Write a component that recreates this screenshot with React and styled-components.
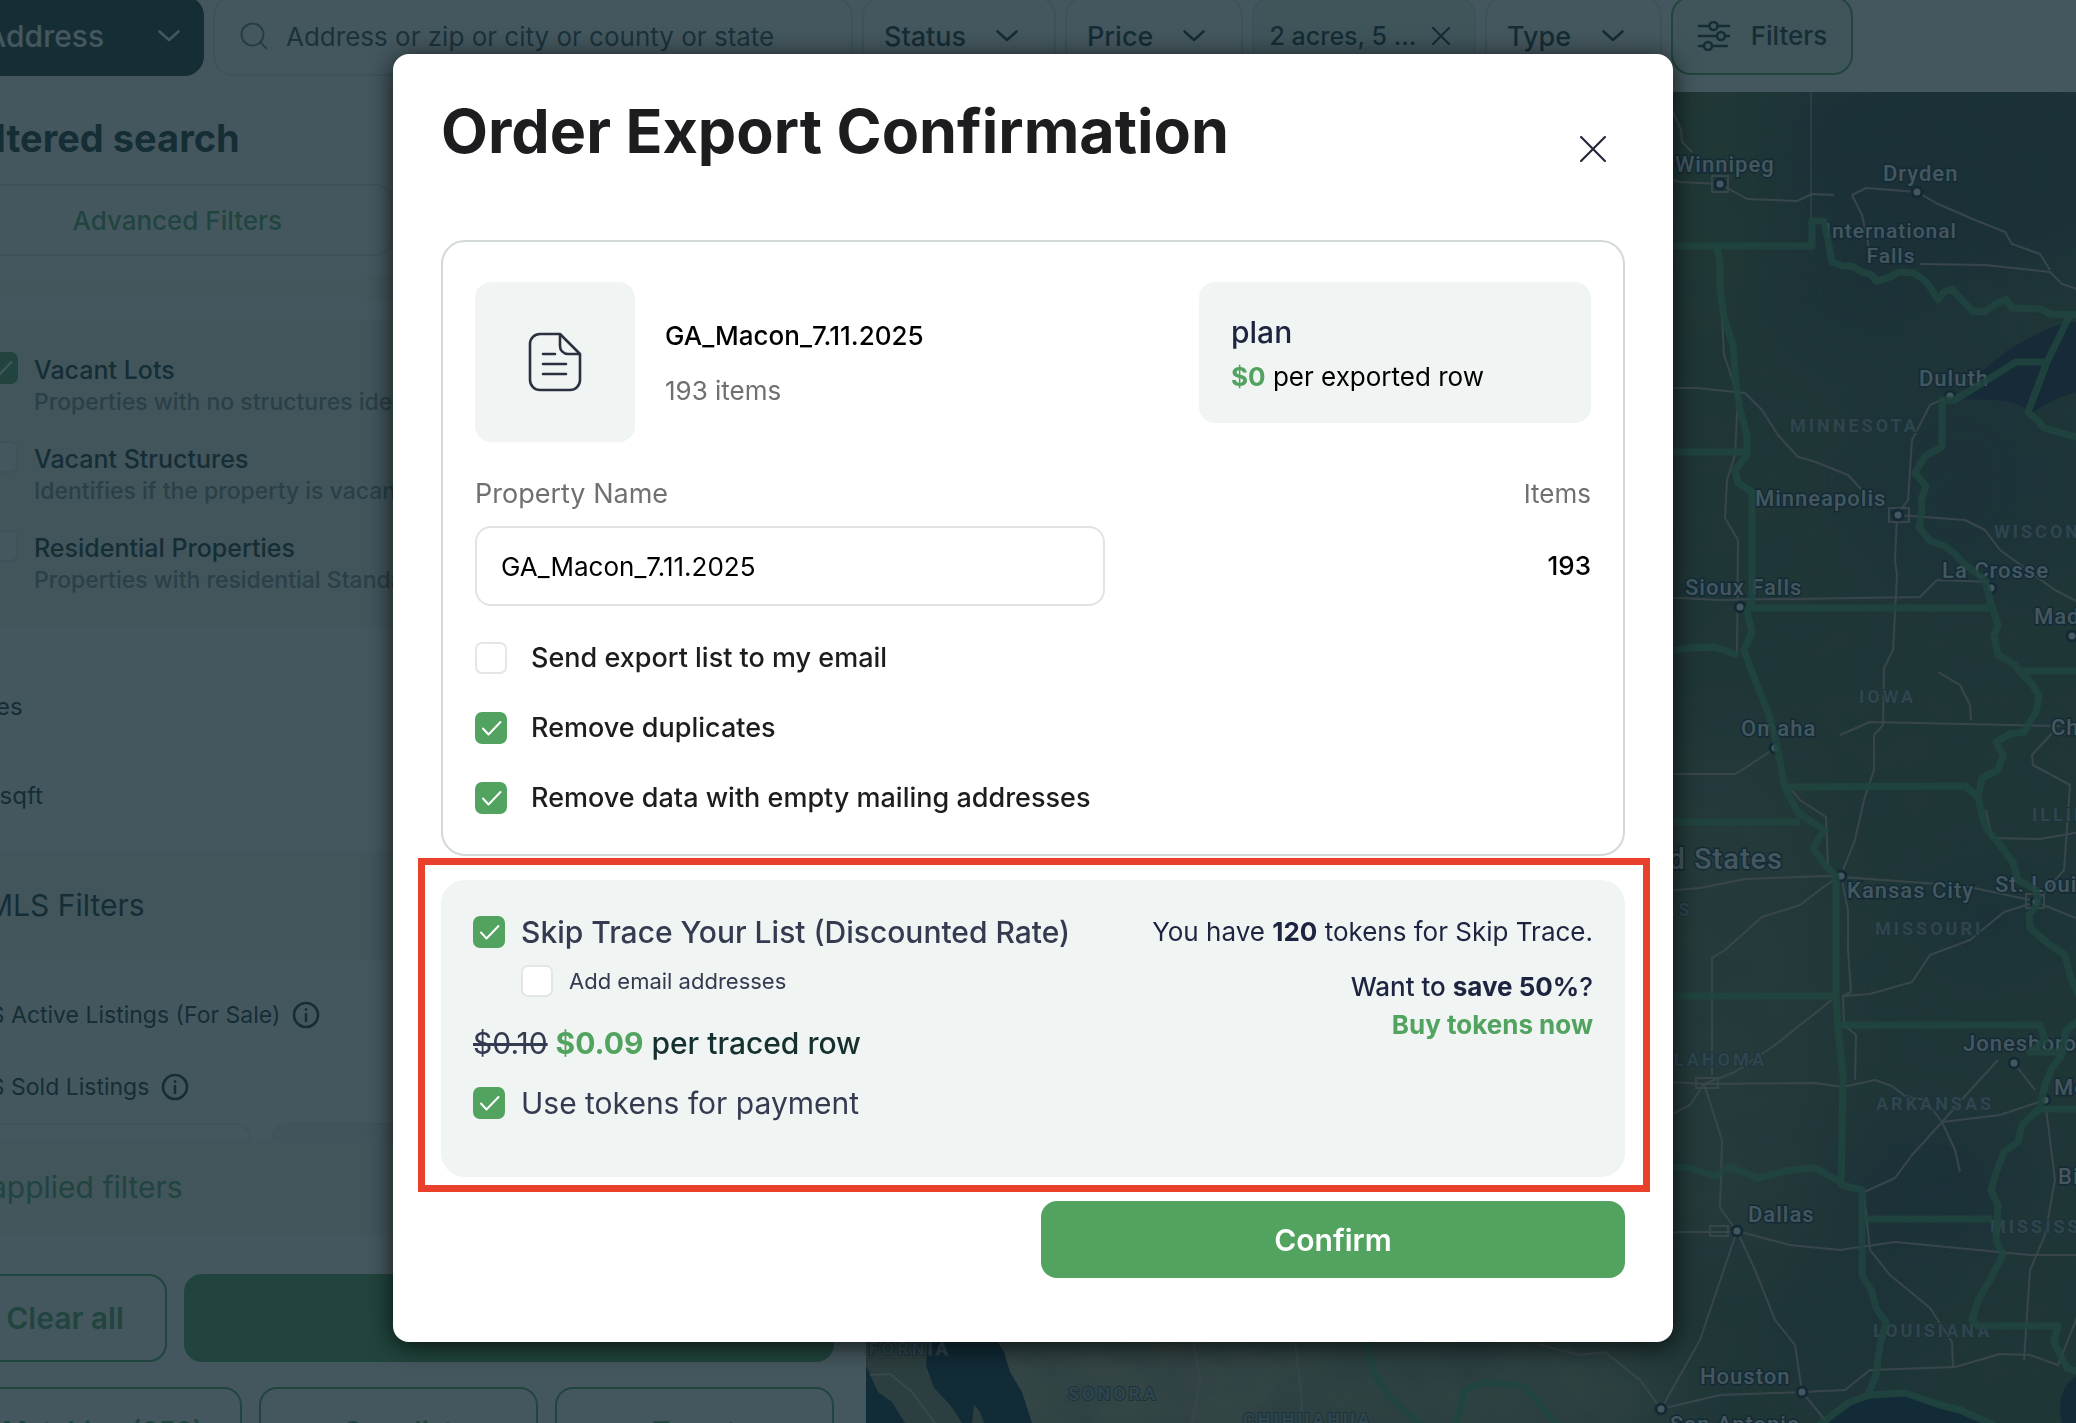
import React, { useState } from "react";
import styled, { createGlobalStyle } from "styled-components";

const GlobalStyle = createGlobalStyle`
  *,
  *::before,
  *::after {
    box-sizing: border-box;
  }
  body {
    margin: 0;
    overflow: hidden;
    background: #ffffff;
    color: #152d36;
    font-family: Inter, "Liberation Sans", sans-serif;
  }
  button,
  input,
  select {
    font-family: inherit;
    color: inherit;
  }
  h1,
  h2,
  h3,
  p {
    margin: 0;
  }
`;

const green = "#52a35f";

/* ---------- page behind the dialog ---------- */

const Page = styled.div`
  display: flex;
  flex-direction: column;
  height: calc(100vh + 4px);
  margin: -4px 0 0 -69px;
  overflow: hidden;
`;

const TopBar = styled.header`
  display: flex;
  flex: none;
  gap: 9px;
  height: 96px;
  padding-left: 32px;
`;

const SelectBox = styled.div`
  display: grid;
  align-items: center;
  width: ${(props) => props.$width}px;
  height: 80px;

  svg {
    grid-area: 1 / 1;
    justify-self: end;
    margin-right: ${(props) => (props.$dark ? 24 : 38)}px;
    pointer-events: none;
  }
`;

const Select = styled.select`
  grid-area: 1 / 1;
  width: 100%;
  height: 100%;
  padding: 0 20px;
  appearance: none;
  border: 2px solid ${(props) => (props.$dark ? "#152d36" : "#dfe4e3")};
  border-radius: 20px;
  background: ${(props) => (props.$dark ? "#152d36" : "#ffffff")};
  color: ${(props) => (props.$dark ? "#ffffff" : "#152d36")};
  font-size: ${(props) => (props.$dark ? 30 : 27)}px;
  font-weight: 500;
`;

const SearchBox = styled.label`
  display: flex;
  align-items: center;
  gap: 18px;
  width: 640px;
  height: 80px;
  padding: 0 25px;
  border: 2px solid #dfe4e3;
  border-radius: 20px;
`;

const SearchInput = styled.input`
  flex: 1;
  min-width: 0;
  padding: 0;
  border: 0;
  outline: 0;
  background: none;
  font-size: 26px;

  &::placeholder {
    color: #34484f;
    opacity: 1;
  }
`;

const FilterChip = styled.button`
  display: flex;
  align-items: center;
  justify-content: center;
  gap: ${(props) => (props.$outlined ? 20 : 16)}px;
  width: ${(props) => props.$width}px;
  height: ${(props) => (props.$outlined ? 79 : 80)}px;
  padding: 0 ${(props) => (props.$outlined ? 0 : 8)}px 0 0;
  border: 2px solid ${(props) => (props.$outlined ? green : "#dfe4e3")};
  border-radius: 20px;
  background: #e6f4ea;
  font-size: ${(props) => (props.$outlined ? 26 : 25)}px;
  font-weight: 500;
  white-space: nowrap;
`;

const Main = styled.main`
  display: flex;
  flex: 1;
  min-height: 0;
`;

const Sidebar = styled.aside`
  display: flex;
  flex: none;
  flex-direction: column;
  width: 935px;
`;

const SidebarTitle = styled.h2`
  flex: none;
  padding-left: 32px;
  font-size: 38px;
  font-weight: 700;
  line-height: 92px;
`;

const Tabs = styled.div`
  display: grid;
  flex: none;
  grid-template-columns: 1fr 1fr;
  gap: 14px;
  padding: 0 32px;
`;

const Tab = styled.button`
  height: 72px;
  border: 2px solid #dfe4e3;
  border-radius: 16px;
  background: #ffffff;
  color: ${green};
  font-size: 26px;
  font-weight: 500;
`;

const Band = styled.div`
  flex: none;
  height: 24px;
  margin: 20px 0;
  background: #f4f7f5;
`;

const TypeList = styled.div`
  display: flex;
  flex: none;
  flex-direction: column;
  gap: 25px;
  padding: 32px 32px 33px 55px;
  background: #eff4f1;
`;

const TypeRow = styled.label`
  display: flex;
  align-items: flex-start;
  gap: 16px;
`;

const TypeName = styled.span`
  display: block;
  font-size: 25px;
  font-weight: 500;
  line-height: 36px;
`;

const TypeNote = styled.span`
  display: block;
  color: #80898b;
  font-size: 23px;
  font-weight: 500;
  line-height: 28px;
  white-space: nowrap;
`;

const UnitList = styled.div`
  flex: none;
  padding: 35px 0 11px 26px;
`;

const UnitRow = styled.p`
  font-size: 24px;
  line-height: 89px;
`;

const SectionTitle = styled.h3`
  flex: none;
  padding-left: 55px;
  background: #eff4f1;
  font-size: 30px;
  font-weight: 400;
  line-height: 109px;
`;

const ListingRows = styled.div`
  flex: none;
  padding: 19px 0 0 25px;
`;

const ListingRow = styled.div`
  display: flex;
  align-items: center;
  gap: 12px;
  height: 72px;
  font-size: 23px;
`;

const CutRow = styled.div`
  display: grid;
  flex: none;
  grid-template-columns: 288px 1fr;
  gap: 20px;
  height: 17px;
  padding: 0 32px;
  overflow: hidden;
`;

const CutInput = styled.input`
  width: 100%;
  height: 72px;
  border: 2px solid #e4e9e7;
  border-radius: 16px;
  background: ${(props) => (props.disabled ? "#f0f0f0" : "#ffffff")};
`;

const AppliedBar = styled.a`
  flex: none;
  padding-left: 32px;
  background: #eff4f1;
  color: ${green};
  font-size: 30px;
  line-height: 94px;
  text-decoration: none;
`;

const ButtonRow = styled.div`
  display: grid;
  flex: none;
  grid-template-columns: ${(props) => props.$columns};
  gap: 17px;
  padding: ${(props) => props.$top}px 32px 0;
`;

const SideButton = styled.button`
  height: 88px;
  padding: 0;
  border: 2px solid ${green};
  border-radius: 18px;
  background: ${(props) => (props.$filled ? green : "#ffffff")};
  color: ${(props) => (props.$filled ? "#ffffff" : green)};
  font-size: ${(props) => (props.$small ? 27 : 30)}px;
  font-weight: 600;
`;

const MapPane = styled.section`
  flex: 1;
  min-width: 0;

  svg {
    display: block;
    width: 100%;
    height: 100%;
  }
`;

/* ---------- dialog ---------- */

const Overlay = styled.div`
  position: fixed;
  inset: 0;
  display: flex;
  align-items: flex-start;
  justify-content: center;
  padding: 54px 10px 0 0;
  background: rgba(21, 45, 54, 0.8);
`;

const Dialog = styled.div`
  width: 1280px;
  max-width: 100%;
  padding: 40px 48px 64px;
  border-radius: 16px;
  background: #ffffff;
  box-shadow: 0 4px 26px rgba(0, 0, 0, 0.75);
`;

const DialogHead = styled.div`
  display: flex;
  justify-content: space-between;
  height: 88px;
  margin-bottom: 58px;
`;

const DialogTitle = styled.h1`
  color: #1d1d1f;
  font-size: 61px;
  font-weight: 700;
  line-height: 74px;
`;

const CloseButton = styled.button`
  align-self: flex-end;
  width: 64px;
  height: 64px;
  padding: 0;
  border: 0;
  background: none;
`;

const Card = styled.section`
  padding: 40px 32px 38px;
  border: 2px solid #d3d9d7;
  border-radius: 24px;
  color: #000000;
`;

const FileRow = styled.div`
  display: flex;
  align-items: flex-start;
`;

const FileTile = styled.div`
  display: grid;
  place-items: center;
  width: 160px;
  height: 160px;
  border-radius: 16px;
  background: #f0f4f2;
`;

const FileInfo = styled.div`
  flex: 1;
  padding: 36px 0 0 30px;
`;

const FileName = styled.p`
  font-size: 26px;
  font-weight: 500;
  line-height: 36px;
`;

const Muted = styled.p`
  margin-top: ${(props) => props.$top || 0}px;
  color: #6f7072;
  font-size: 26px;
  line-height: 36px;
`;

const PlanBox = styled.div`
  width: 392px;
  padding: 30px 32px 26px;
  border-radius: 16px;
  background: #f0f4f2;
  font-size: 26px;
`;

const PlanName = styled.p`
  color: #1d2440;
  font-size: 30px;
  font-weight: 500;
  line-height: 40px;
`;

const PlanRate = styled.p`
  margin-top: 4px;
  line-height: 41px;

  b {
    color: ${green};
  }
`;

const Fields = styled.div`
  display: flex;
  justify-content: space-between;
  margin: 34px 0;
`;

const Field = styled.label`
  display: flex;
  flex-direction: column;
  gap: 14px;
  width: 630px;
  color: #6f7072;
  font-size: 27px;
  line-height: 36px;
`;

const TextInput = styled.input`
  height: 80px;
  padding: 0 24px;
  border: 2px solid #e2e4e3;
  border-radius: 16px;
  color: #000000;
  font-size: 26px;
`;

const ItemCount = styled.div`
  text-align: right;
  font-size: 26px;
`;

const ItemNumber = styled.p`
  margin-top: 14px;
  font-weight: 500;
  line-height: 80px;
`;

const OptionList = styled.div`
  display: flex;
  flex-direction: column;
  gap: 34px;
`;

const Option = styled.label`
  display: flex;
  align-items: center;
  gap: ${(props) => (props.$tight ? 16 : 24)}px;
  width: fit-content;
  margin-left: ${(props) => (props.$nested ? 48 : 0)}px;
  font-size: ${(props) => props.$size || 27}px;
  font-weight: ${(props) => props.$weight || 400};
  line-height: ${(props) => props.$line || 36}px;
  color: ${(props) => (props.$tight ? "#343b50" : "#1d1d1f")};
`;

const CheckCell = styled.span`
  display: grid;
  flex: none;
  width: 32px;
  height: 32px;

  svg {
    grid-area: 1 / 1;
    pointer-events: none;
  }
`;

const CheckInput = styled.input`
  grid-area: 1 / 1;
  width: 32px;
  height: 32px;
  margin: 0;
  appearance: none;
  border: 2px solid #e4e6e6;
  border-radius: 7px;
  background: #ffffff;

  &:checked {
    border-color: ${green};
    background: ${green};
  }
`;

const SkipPanel = styled.section`
  position: relative;
  display: flex;
  justify-content: space-between;
  margin: 24px 0;
  padding: 32px 32px 54px;
  border-radius: 24px;
  background: #f0f4f2;
`;

const RedFrame = styled.div`
  position: absolute;
  inset: -22px -25px -15px -23px;
  border: 7px solid #e8402a;
  pointer-events: none;
`;

const SkipOptions = styled.div`
  display: flex;
  flex-direction: column;
`;

const Price = styled.p`
  margin: 13px 0 20px;
  color: #15302f;
  font-size: 30px;
  font-weight: 500;
  line-height: 40px;

  s {
    color: #343b50;
    font-weight: 400;
  }
  b {
    color: ${green};
  }
`;

const Tokens = styled.div`
  padding-top: 1px;
  color: #1d2440;
  font-size: 26px;
  line-height: 38px;
  text-align: right;
`;

const TokenOffer = styled.p`
  margin-top: 17px;
  font-weight: ${(props) => props.$weight || 400};
`;

const BuyLink = styled.a`
  color: ${green};
  font-weight: 700;
  text-decoration: none;
`;

const ConfirmRow = styled.div`
  display: flex;
  justify-content: flex-end;
`;

const ConfirmButton = styled.button`
  width: 584px;
  height: 77px;
  border: 0;
  border-radius: 16px;
  background: ${green};
  color: #ffffff;
  font-size: 30px;
  font-weight: 600;
`;

/* ---------- icons ---------- */

const ChevronIcon = () => (
  <svg width="22" height="12" viewBox="0 0 22 12" fill="none" stroke="currentColor" strokeWidth="2.6">
    <path d="M1.5 1.5 11 10l9.5-8.5" strokeLinecap="round" strokeLinejoin="round" />
  </svg>
);

const SearchIcon = () => (
  <svg width="28" height="28" viewBox="0 0 28 28" fill="none" stroke="#6c7c80" strokeWidth="2">
    <circle cx="12.5" cy="12.5" r="11" />
    <path d="m20.5 20.5 6 6" strokeLinecap="round" />
  </svg>
);

const CrossIcon = ({ size, color, width }) => (
  <svg width={size} height={size} viewBox="0 0 24 24" fill="none" stroke={color} strokeWidth={width}>
    <path d="M1 1l22 22M23 1 1 23" strokeLinecap="round" />
  </svg>
);

const SlidersIcon = () => (
  <svg width="34" height="30" viewBox="0 0 34 30" fill="none" stroke="#152d36" strokeWidth="2.6" strokeLinecap="round">
    <path d="M2 5h10M21 5h11M2 15h17M28 15h4M2 25h5M16 25h14" />
    <circle cx="16.5" cy="5" r="4" />
    <circle cx="24" cy="15" r="4" />
    <circle cx="11" cy="25" r="4" />
  </svg>
);

const InfoIcon = () => (
  <svg width="28" height="28" viewBox="0 0 28 28" fill="none" stroke="#152d36" strokeWidth="2.6">
    <circle cx="14" cy="14" r="12" />
    <path d="M14 13v7" strokeLinecap="round" />
    <circle cx="14" cy="8.5" r="1" fill="#152d36" strokeWidth="1" />
  </svg>
);

const FileIcon = () => (
  <svg width="54" height="60" viewBox="0 0 54 60" fill="none" stroke="#2b3040" strokeWidth="2.6">
    <path
      d="M32 2H12C6.5 2 2 6.5 2 12v36c0 5.5 4.5 10 10 10h30c5.5 0 10-4.5 10-10V22z"
      strokeLinejoin="round"
    />
    <path d="M32 2v12c0 4.5 3.5 8 8 8h12" strokeLinejoin="round" />
    <path d="M15 22h12M15 32h23M15 42h23" strokeLinecap="round" />
  </svg>
);

const Checkbox = ({ checked, onChange }) => (
  <CheckCell>
    <CheckInput type="checkbox" checked={checked} onChange={onChange} />
    {checked && (
      <svg width="32" height="32" viewBox="0 0 32 32" fill="none" stroke="#ffffff" strokeWidth="2">
        <path d="m8 16.5 5.5 6L25.5 10" strokeLinecap="round" strokeLinejoin="round" />
      </svg>
    )}
  </CheckCell>
);

/* ---------- map ---------- */

const borders = [
  "M1640 246H1812V221H1824L1828 240 1832 262 1843 266 1852 266 1862 272 1872 275 1876 281 1885 279 1900 272 1914 273 1924 280 1930 287 1938 300 1944 292 1952 289 1962 300 1972 311 1984 312 1996 304 2006 299 2012 308 2042 309 2050 314 2080 315",
  "M2070 315 2047 362 2028 412 2038 421 2044 428 2080 438",
  "M2047 362H2016L1955 400H1942V447L1925 456 1915 473 1926 486 1921 500 1922 512 1919 527 1930 541 1944 546 1955 554 1962 562 1972 570 1985 580 1990 600 1998 625 1994 636 1998 655 2015 665 2020 672 2032 684 2039 696 2036 712 2028 725 2024 732 2010 734 1996 742 2003 755 1998 770 1982 778 1978 797 1982 815 1986 828 2000 845 2013 862 2018 880 2036 890 2038 903 2029 915 2030 928 2050 945 2065 955 2070 975 2080 998",
  "M1717 246 1720 262 1720 290 1724 318 1733 345 1736 385 1740 410 1747 435 1747 455 1735 470 1738 483 1752 492V600L1747 612 1752 632 1744 650 1755 680 1768 712 1777 745 1785 788 1798 813 1824 830 1813 848 1825 865 1836 876V998L1838 1030 1843 1075 1841 1185 1862 1190V1275L1872 1292 1876 1308 1886 1322 1880 1345 1876 1375 1868 1395",
  "M1752 608H1990M1640 452H1747M2020 671H2080M1787 787 1965 786 1978 797M1640 822H1800M1640 996H1836",
  "M1640 655 1690 648 1715 647 1738 655",
  "M1838 1025H2040L2045 1040 2030 1052H2062M2040 1109H2080M1864 1219H1992",
  "M2080 1020 2066 1030 2062 1055 2052 1068 2045 1085 2040 1108 2022 1125 2018 1142 2004 1152 1997 1170 1991 1190 1998 1205 1996 1240 2003 1255 1990 1280 1978 1300 1972 1320 1978 1326H2058L2054 1342 2067 1368 2080 1372",
  "M1640 1166 1690 1168 1715 1176 1730 1167 1758 1178 1790 1170 1815 1168 1842 1183",
  "M1815 1428 1850 1402 1870 1395 1905 1393 1940 1405 1960 1410 2000 1428",
  "M1365 1335 1372 1370 1390 1398 1425 1428M1455 1428 1465 1390 1485 1382 1525 1387 1545 1410 1560 1428",
];

const roads = [
  "M1640 172 1680 182 1720 184 1747 199 1797 201 1812 194 1834 195",
  "M1673 112 1681 130 1682 142 1692 152",
  "M1852 195 1866 188 1917 192 1938 204 1975 220 2005 232 2012 244 2040 254 2050 270",
  "M1852 195 1862 215 1868 242 1870 262",
  "M1920 264 1985 265 2050 272 2062 284 2080 290",
  "M1640 388 1697 388 1745 393 1762 410 1778 435 1798 457 1813 461 1848 475 1862 490",
  "M1722 318 1724 355 1738 395 1735 455 1727 480 1725 518 1738 540 1737 655",
  "M1950 396 1930 405 1912 440 1908 500 1897 515 1895 560 1897 575 1893 650 1884 668 1883 725 1874 735 1874 770 1864 800 1855 840 1843 870",
  "M1897 515 1965 520 1985 530 2000 550 2030 572 2055 590 2080 603",
  "M1640 596 1720 600 1920 597 1937 580 1990 582",
  "M1938 672 1960 685 1970 705 1971 720M1840 735 1870 722 2060 726",
  "M1775 748 1745 768 1735 774 1640 774M1790 788 1800 800 1826 817 1828 866",
  "M1640 893 1700 888 1745 879 1828 876 1965 886 2030 900",
  "M1841 876 1826 885 1800 905 1762 917 1725 950 1712 958 1712 1075",
  "M1841 876 1848 910 1848 950 1851 992 1843 996 1844 1025 1856 1035 1855 1080",
  "M1640 1080 1704 1084 1815 1083 1843 1087 1875 1080 1892 1086 1905 1096 1925 1100 1942 1122",
  "M1843 996 1870 994 1912 982 1930 955 1970 940 2004 912 2036 902 2076 918",
  "M1836 996 1822 1008 1800 1025 1775 1045 1735 1072 1704 1084",
  "M1704 1084 1722 1140 1720 1208 1737 1231 1790 1245 1840 1250 1895 1242 2030 1255 2080 1255",
  "M1704 1084 1690 1105 1650 1125M1640 1236 1680 1232H1737",
  "M1737 1231 1755 1270 1775 1320 1795 1345 1802 1392 1825 1420M1737 1231 1722 1275 1700 1340 1661 1409",
  "M1661 1409 1720 1395 1802 1392 1845 1390 1870 1370 1955 1367 2000 1354 2030 1355 2058 1365 2080 1310",
  "M1862 1193 1895 1178 1912 1155 1942 1122 2000 1115 2045 1100M1942 1122 1955 1150 1960 1172",
  "M1864 1195 1870 1250 1890 1275 1930 1308 1952 1342 1953 1367",
  "M2045 1100 2055 1180 2045 1235 2030 1270 2024 1360",
  "M2014 1063 2035 1090M1942 1122 1975 1085 1998 1060",
  "M2055 730 2032 755 2033 765 2070 785 2064 870 2036 902M1986 810 1992 838 2040 839 2080 832",
  "M1192 1335 1200 1380 1192 1423M1295 1342 1302 1400 1300 1423M1540 1345 1580 1355 1605 1352 1640 1380 1661 1409",
];

const cities = [
  ["Winnipeg", 1675, 172, 1720, 184],
  ["Dryden", 1883, 181, 1917, 192],
  ["Duluth", 1919, 386, 1950, 396],
  ["Minneapolis", 1755, 506, 1898, 515],
  ["La Crosse", 1942, 578, 1991, 588],
  ["Sioux Falls", 1685, 595, 1740, 607],
  ["Madison", 2034, 624, 2072, 636],
  ["Omaha", 1741, 736, 1775, 748],
  ["Chicago", 2051, 735, 2120, 748],
  ["Kansas City", 1847, 898, 1841, 876],
  ["St. Louis", 1995, 892, 2036, 902],
  ["Jonesboro", 1963, 1051, 2014, 1063],
  ["Memphis", 2054, 1095, 2045, 1100],
  ["Birmingham", 2058, 1184, 2120, 1190],
  ["Dallas", 1748, 1222, 1737, 1231],
  ["Houston", 1700, 1384, 1802, 1392],
  ["San Antonio", 1670, 1432, 1661, 1409],
];

const regions = [
  ["MINNESOTA", 1790, 432],
  ["WISCONSIN", 1994, 538],
  ["IOWA", 1859, 703],
  ["ILLINOIS", 2032, 821],
  ["KANSAS", 1604, 916],
  ["MISSOURI", 1875, 935],
  ["OKLAHOMA", 1644, 1066],
  ["ARKANSAS", 1876, 1110],
  ["MISSISSIPPI", 1990, 1233],
  ["TEXAS", 1605, 1289],
  ["LOUISIANA", 1873, 1337],
  ["CALIFORNIA", 818, 1355],
  ["SONORA", 1068, 1400],
  ["CHIHUAHUA", 1243, 1426],
];

const MapText = styled.text`
  fill: ${(props) => (props.$region ? "#94a4b4" : "#ffffff")};
  stroke: ${(props) => (props.$region ? "#3c4c3c" : "#0c2038")};
  stroke-width: ${(props) => (props.$region ? 2 : 3)}px;
  paint-order: stroke;
  font-family: Roboto, sans-serif;
  font-size: ${(props) => props.$size}px;
  font-weight: ${(props) => (props.$region ? 700 : 500)};
  letter-spacing: ${(props) => (props.$region ? 3 : 1)}px;
`;

const MapDrawing = () => (
  <svg viewBox="866 92 1210 1331" preserveAspectRatio="xMinYMin slice" role="img" aria-label="Map">
    <defs>
      <filter id="soft" x="-50%" y="-50%" width="200%" height="200%">
        <feGaussianBlur stdDeviation="34" />
      </filter>
      <filter id="terrain" x="0" y="0" width="100%" height="100%">
        <feTurbulence type="fractalNoise" baseFrequency="0.02 0.026" numOctaves="4" seed="8" />
        <feColorMatrix values="0 0 0 0 0.04  0 0 0 0 0.08  0 0 0 0 0.1  1.6 0 0 0 -0.55" />
      </filter>
    </defs>
    <rect x="866" y="92" width="1210" height="1331" fill="#4a5c3c" />
    <g filter="url(#soft)">
      <ellipse cx="1960" cy="160" rx="190" ry="130" fill="#32403c" />
      <ellipse cx="1860" cy="300" rx="80" ry="60" fill="#34443a" />
      <ellipse cx="1690" cy="200" rx="50" ry="140" fill="#4c6630" />
      <ellipse cx="1960" cy="480" rx="110" ry="120" fill="#384a42" />
      <ellipse cx="1720" cy="1000" rx="100" ry="260" fill="#66704c" />
      <ellipse cx="1990" cy="920" rx="70" ry="50" fill="#304840" />
      <ellipse cx="1930" cy="1190" rx="90" ry="70" fill="#344244" />
      <ellipse cx="1850" cy="1320" rx="70" ry="70" fill="#384a40" />
      <ellipse cx="1150" cy="1390" rx="320" ry="90" fill="#aea482" />
      <ellipse cx="1470" cy="1390" rx="200" ry="80" fill="#949474" />
    </g>
    <rect x="866" y="92" width="1210" height="1331" filter="url(#terrain)" opacity="0.3" />
    <path d="M1970 384C1990 360 2025 335 2068 322H2080V392C2060 394 2040 408 2030 414 2024 402 2000 398 1958 400Z" fill="#1a203c" />
    <path d="M1815 1423 1850 1404 1870 1397 1905 1395 1940 1407 1960 1412 2000 1423ZM2062 1423C2056 1400 2064 1382 2080 1374V1423Z" fill="#0c243c" />
    <path d="M866 1335H930L926 1370 934 1388 952 1410 962 1423H905L892 1400 878 1390 870 1370 866 1365Z" fill="#8a8468" />
    <path d="M928 1335H993L1004 1352 1010 1372 1022 1392 1032 1423H962L950 1405 934 1388 926 1366ZM866 1366 878 1392 892 1402 905 1423H866Z" fill="#04243c" />
    <path d="M974 1405 980 1412 984 1423H972Z" fill="#8a8468" />
    <path d="M870 1375 890 1374 912 1392 935 1423" fill="none" stroke="#c0b8a0" strokeWidth="2" />
    <g fill="none" stroke="#c4aaa0" strokeWidth="2" strokeLinejoin="round">
      {roads.map((d) => (
        <path key={d} d={d} />
      ))}
      <path d="M1712 176h16v16h-16zM1889 508h20v14h-20zM1696 1078h22v10h-22zM1710 1226h18v10h-18zM2026 894h18v14h-18z" />
    </g>
    <path d="M1811 92V221" stroke="#b8c0c0" strokeWidth="1" />
    {cities.map(([name, x, y, dotX, dotY]) => (
      <g key={name}>
        <circle cx={dotX} cy={dotY} r="5" fill="#ffffff" stroke="#0c2038" strokeWidth="3" />
        <MapText x={x} y={y} $size={22}>
          {name}
        </MapText>
      </g>
    ))}
    <MapText x="1891" y="238" textAnchor="middle" $size={21}>
      International
    </MapText>
    <MapText x="1891" y="263" textAnchor="middle" $size={21}>
      Falls
    </MapText>
    <MapText x="1783" y="869" textAnchor="end" $size={29}>
      United States
    </MapText>
    {regions.map(([name, x, y]) => (
      <MapText key={name} x={x} y={y} $size={18} $region>
        {name}
      </MapText>
    ))}
    <g fill="none" stroke="#4aa468" strokeWidth="7" strokeLinejoin="round" opacity="0.85">
      {borders.map((d) => (
        <path key={d} d={d} />
      ))}
    </g>
  </svg>
);

/* ---------- app ---------- */

const topSelects = {
  status: { label: "Status", width: 194 },
  price: { label: "Price", width: 178 },
  type: { label: "Type", width: 177 },
};

const TopSelect = ({ label, width, dark }) => (
  <SelectBox $width={width} $dark={dark}>
    <Select aria-label={label} $dark={dark}>
      <option>{label}</option>
    </Select>
    <ChevronIcon />
  </SelectBox>
);

const propertyTypes = [
  { id: "lots", name: "Vacant Lots", note: "Properties with no structures identified" },
  { id: "structures", name: "Vacant Structures", note: "Identifies if the property is vacant" },
  { id: "residential", name: "Residential Properties", note: "Properties with residential Standard use" },
];

const DarkChevron = styled.span`
  display: contents;
  color: #ffffff;
`;

export default function App() {
  const [name, setName] = useState("GA_Macon_7.11.2025");
  const [checks, setChecks] = useState({
    lots: true,
    structures: false,
    residential: false,
    email: false,
    duplicates: true,
    empty: true,
    skip: true,
    addEmails: false,
    tokens: true,
  });

  const bind = (key) => ({
    checked: checks[key],
    onChange: () => setChecks({ ...checks, [key]: !checks[key] }),
  });

  return (
    <>
      <GlobalStyle />
      <Page>
        <TopBar>
          <DarkChevron>
            <TopSelect label="Address" width={241} dark />
          </DarkChevron>
          <SearchBox>
            <SearchIcon />
            <SearchInput aria-label="Search" placeholder="Address or zip or city or county or state" />
          </SearchBox>
          <TopSelect {...topSelects.status} />
          <TopSelect {...topSelects.price} />
          <FilterChip $width={224}>
            2 acres, 5 ...
            <CrossIcon size={18} color="#152d36" width={3} />
          </FilterChip>
          <TopSelect {...topSelects.type} />
          <FilterChip $width={182} $outlined>
            <SlidersIcon />
            Filters
          </FilterChip>
        </TopBar>
        <Main>
          <Sidebar>
            <SidebarTitle>Filtered search</SidebarTitle>
            <Tabs>
              <Tab>Advanced Filters</Tab>
              <Tab>Saved Filters</Tab>
            </Tabs>
            <Band />
            <TypeList>
              {propertyTypes.map((type) => (
                <TypeRow key={type.id}>
                  <Checkbox {...bind(type.id)} />
                  <span>
                    <TypeName>{type.name}</TypeName>
                    <TypeNote>{type.note}</TypeNote>
                  </span>
                </TypeRow>
              ))}
            </TypeList>
            <UnitList>
              <UnitRow>Acres</UnitRow>
              <UnitRow>Lot sqft</UnitRow>
            </UnitList>
            <SectionTitle>MLS Filters</SectionTitle>
            <ListingRows>
              <ListingRow>
                MLS Active Listings (For Sale)
                <InfoIcon />
              </ListingRow>
              <ListingRow>
                MLS Sold Listings
                <InfoIcon />
              </ListingRow>
            </ListingRows>
            <CutRow>
              <CutInput aria-label="From" />
              <CutInput aria-label="To" disabled />
            </CutRow>
            <AppliedBar href="#applied">8 applied filters</AppliedBar>
            <ButtonRow $columns="204px 1fr" $top={40}>
              <SideButton>Clear all</SideButton>
              <SideButton $filled>Apply</SideButton>
            </ButtonRow>
            <ButtonRow $columns="1fr 1fr 1fr" $top={25}>
              <SideButton $small>Matching (353)</SideButton>
              <SideButton $small>Save list</SideButton>
              <SideButton $small>Target</SideButton>
            </ButtonRow>
          </Sidebar>
          <MapPane>
            <MapDrawing />
          </MapPane>
        </Main>
      </Page>

      <Overlay>
        <Dialog role="dialog" aria-modal="true" aria-labelledby="export-title">
          <DialogHead>
            <DialogTitle id="export-title">Order Export Confirmation</DialogTitle>
            <CloseButton aria-label="Close">
              <CrossIcon size={26} color="#23283a" width={2} />
            </CloseButton>
          </DialogHead>

          <Card>
            <FileRow>
              <FileTile>
                <FileIcon />
              </FileTile>
              <FileInfo>
                <FileName>{name}</FileName>
                <Muted $top={19}>193 items</Muted>
              </FileInfo>
              <PlanBox>
                <PlanName>plan</PlanName>
                <PlanRate>
                  <b>$0</b> per exported row
                </PlanRate>
              </PlanBox>
            </FileRow>

            <Fields>
              <Field>
                Property Name
                <TextInput value={name} onChange={(e) => setName(e.target.value)} />
              </Field>
              <ItemCount>
                <Muted>Items</Muted>
                <ItemNumber>193</ItemNumber>
              </ItemCount>
            </Fields>

            <OptionList>
              <Option $weight={500}>
                <Checkbox {...bind("email")} />
                Send export list to my email
              </Option>
              <Option $weight={500}>
                <Checkbox {...bind("duplicates")} />
                Remove duplicates
              </Option>
              <Option $weight={500}>
                <Checkbox {...bind("empty")} />
                Remove data with empty mailing addresses
              </Option>
            </OptionList>
          </Card>

          <SkipPanel>
            <SkipOptions>
              <Option $tight $size={30} $weight={500} $line={40}>
                <Checkbox {...bind("skip")} />
                Skip Trace Your List (Discounted Rate)
              </Option>
              <Option $tight $nested $size={22} $line={58}>
                <Checkbox {...bind("addEmails")} />
                Add email addresses
              </Option>
              <Price>
                <s>$0.10</s> <b>$0.09</b> per traced row
              </Price>
              <Option $tight $size={30} $line={40}>
                <Checkbox {...bind("tokens")} />
                Use tokens for payment
              </Option>
            </SkipOptions>
            <Tokens>
              <p>
                You have <b>120</b> tokens for Skip Trace.
              </p>
              <TokenOffer $weight={500}>
                Want to <b>save 50%</b>?
              </TokenOffer>
              <BuyLink href="#tokens">Buy tokens now</BuyLink>
            </Tokens>
            <RedFrame />
          </SkipPanel>

          <ConfirmRow>
            <ConfirmButton>Confirm</ConfirmButton>
          </ConfirmRow>
        </Dialog>
      </Overlay>
    </>
  );
}
